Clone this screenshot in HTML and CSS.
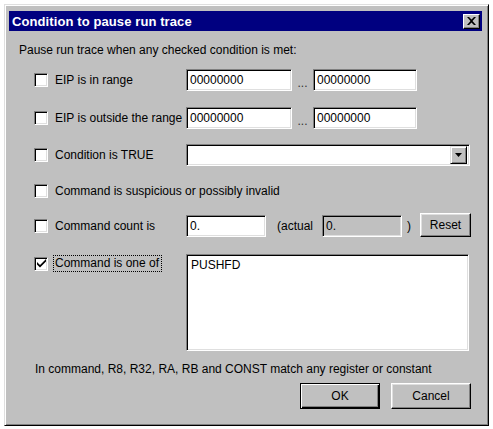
FILE: index.html
```html
<!DOCTYPE html>
<html>
<head>
<meta charset="utf-8">
<link rel="stylesheet" href="styles.css">
</head>
<body>
<div class="window">
  <div class="titlebar">
    <span class="title">Condition to pause run trace</span>
    <span class="close"><svg width="9" height="8" viewBox="0 0 9 8"><path d="M0 0h2l2.5 2.5L7 0h2L5.5 4 9 8H7L4.5 5.5 2 8H0l3.5-4z" fill="#000"/></svg></span>
  </div>
  <div class="content">
    <div class="intro">Pause run trace when any checked condition is met:</div>

    <div class="row r1">
      <div class="lbl"><span class="cb"></span><span class="txt">EIP is in range</span></div>
      <div class="edit w-addr">00000000</div>
      <span class="dots">...</span>
      <div class="edit w-addr">00000000</div>
    </div>

    <div class="row r2">
      <div class="lbl"><span class="cb"></span><span class="txt">EIP is outside the range</span></div>
      <div class="edit w-addr">00000000</div>
      <span class="dots">...</span>
      <div class="edit w-addr">00000000</div>
    </div>

    <div class="row r3">
      <div class="lbl"><span class="cb"></span><span class="txt">Condition is TRUE</span></div>
      <div class="edit combo"><span class="combo-val"></span><span class="drop"><svg width="7" height="4" viewBox="0 0 7 4"><path d="M0 0h7L3.5 4z" fill="#000"/></svg></span></div>
    </div>

    <div class="row r4">
      <div class="lbl"><span class="cb"></span><span class="txt">Command is suspicious or possibly invalid</span></div>
    </div>

    <div class="row r5">
      <div class="lbl"><span class="cb"></span><span class="txt">Command count is</span></div>
      <div class="edit w-count">0.</div>
      <span class="actual">(actual</span>
      <div class="edit w-actual ro">0.</div>
      <span class="paren">)</span>
      <button class="btn reset">Reset</button>
    </div>

    <div class="row r6">
      <div class="lbl top"><span class="cb checked"><svg width="9" height="9" viewBox="0 0 9 9"><path d="M0 3l3 3 6-6v2.5l-6 6-3-3z" fill="#000"/></svg></span><span class="txt focus">Command is one of</span></div>
      <div class="edit memo">PUSHFD</div>
    </div>

    <div class="note">In command, R8, R32, RA, RB and CONST match any register or constant</div>

    <div class="buttons">
      <button class="btn ok">OK</button>
      <button class="btn">Cancel</button>
    </div>
  </div>
</div>
</body>
</html>
```

FILE: styles.css
```css
html, body {
  margin: 0;
  padding: 0;
  background: #ffffff;
}
body {
  font-family: "Liberation Sans", Arial, sans-serif;
  font-size: 12px;
  color: #000;
}
.window {
  box-sizing: border-box;
  margin: 4px 0 0 4px;
  width: 485px;
  height: 422px;
  background: #c0c0c0;
  border-top: 1px solid #dfdfdf;
  border-left: 1px solid #dfdfdf;
  border-right: 1px solid #000;
  border-bottom: 1px solid #000;
  box-shadow: inset 1px 1px 0 #fff, inset -1px -1px 0 #808080;
  padding: 6px 6px 0 4px;
}
.titlebar {
  height: 20px;
  background: #000080;
  color: #fff;
  display: flex;
  align-items: center;
  justify-content: space-between;
  padding: 0 2px 0 3px;
}
.title {
  font-weight: bold;
  font-size: 13px;
  letter-spacing: 0.1px;
}
.close {
  box-sizing: border-box;
  width: 17px;
  height: 15px;
  background: #c0c0c0;
  border-top: 1px solid #fff;
  border-left: 1px solid #fff;
  border-right: 1px solid #000;
  border-bottom: 1px solid #000;
  box-shadow: inset -1px -1px 0 #808080;
  display: flex;
  align-items: center;
  justify-content: center;
  padding-bottom: 1px;
}
.content {
  padding: 0 0 0 10px;
}
.intro {
  margin-top: 12px;
  height: 15px;
  line-height: 15px;
}
.row {
  display: flex;
  align-items: center;
  height: 22px;
  margin-left: 15px;
}
.r1 { margin-top: 11px; }
.r2 { margin-top: 16px; }
.r3 { margin-top: 15px; }
.r4 { margin-top: 14px; }
.r5 { margin-top: 13px; }
.r6 { margin-top: 17px; height: 97px; align-items: flex-start; }
.lbl {
  width: 152px;
  display: flex;
  align-items: center;
  white-space: nowrap;
}
.lbl.top { margin-top: 2px; }
.cb {
  box-sizing: border-box;
  width: 14px;
  height: 14px;
  background: #fff;
  border-top: 1px solid #808080;
  border-left: 1px solid #808080;
  border-right: 1px solid #fff;
  border-bottom: 1px solid #fff;
  box-shadow: inset 1px 1px 0 #000, inset -1px -1px 0 #dfdfdf;
  margin-right: 7px;
  flex: none;
  display: flex;
  align-items: center;
  justify-content: center;
}
.txt {
  line-height: 15px;
}
.focus {
  outline: 1px dotted #000;
  outline-offset: 0;
  padding: 0 2px 0 1px;
  margin-left: -1px;
}
.edit {
  box-sizing: border-box;
  height: 22px;
  background: #fff;
  border-top: 1px solid #808080;
  border-left: 1px solid #808080;
  border-right: 1px solid #fff;
  border-bottom: 1px solid #fff;
  box-shadow: inset 1px 1px 0 #000, inset -1px -1px 0 #dfdfdf;
  padding: 0 3px;
  line-height: 20px;
  white-space: nowrap;
  flex: none;
}
.w-addr { width: 106px; }
.w-addr + .dots + .w-addr { width: 104px; }
.dots {
  width: 21px;
  text-align: center;
  padding-top: 6px;
  color: #333;
}
.combo {
  width: 284px;
  display: flex;
  align-items: center;
  justify-content: flex-end;
  padding: 0 2px;
}
.drop {
  box-sizing: border-box;
  width: 17px;
  height: 18px;
  background: #c0c0c0;
  border-top: 1px solid #dfdfdf;
  border-left: 1px solid #dfdfdf;
  border-right: 1px solid #000;
  border-bottom: 1px solid #000;
  box-shadow: inset 1px 1px 0 #fff, inset -1px -1px 0 #808080;
  display: flex;
  align-items: center;
  justify-content: center;
}
.w-count { width: 80px; }
.actual {
  margin-left: 11px;
  width: 45px;
}
.w-actual { width: 80px; }
.ro { background: #c0c0c0; }
.paren {
  margin-left: 5px;
  width: 13px;
}
.btn {
  box-sizing: border-box;
  font-family: "Liberation Sans", Arial, sans-serif;
  font-size: 12px;
  color: #000;
  background: #c0c0c0;
  border-top: 1px solid #fff;
  border-left: 1px solid #fff;
  border-right: 1px solid #000;
  border-bottom: 1px solid #000;
  box-shadow: inset -1px -1px 0 #808080, inset 1px 1px 0 #dfdfdf;
  padding: 0;
  margin: 0;
}
.reset {
  width: 51px;
  height: 24px;
  margin-top: -2px;
}
.memo {
  width: 283px;
  height: 97px;
  line-height: 15px;
  padding: 3px 4px;
}
.note {
  margin-top: 11px;
  margin-left: 16px;
  line-height: 15px;
}
.buttons {
  display: flex;
  justify-content: flex-end;
  gap: 11px;
  margin-top: 6px;
  padding-right: 11px;
}
.buttons .btn {
  width: 80px;
  height: 26px;
}
.buttons .ok {
  border: 1px solid #000;
  box-shadow: inset 1px 1px 0 #fff, inset -1px -1px 0 #000, inset -2px -2px 0 #808080;
}
```
